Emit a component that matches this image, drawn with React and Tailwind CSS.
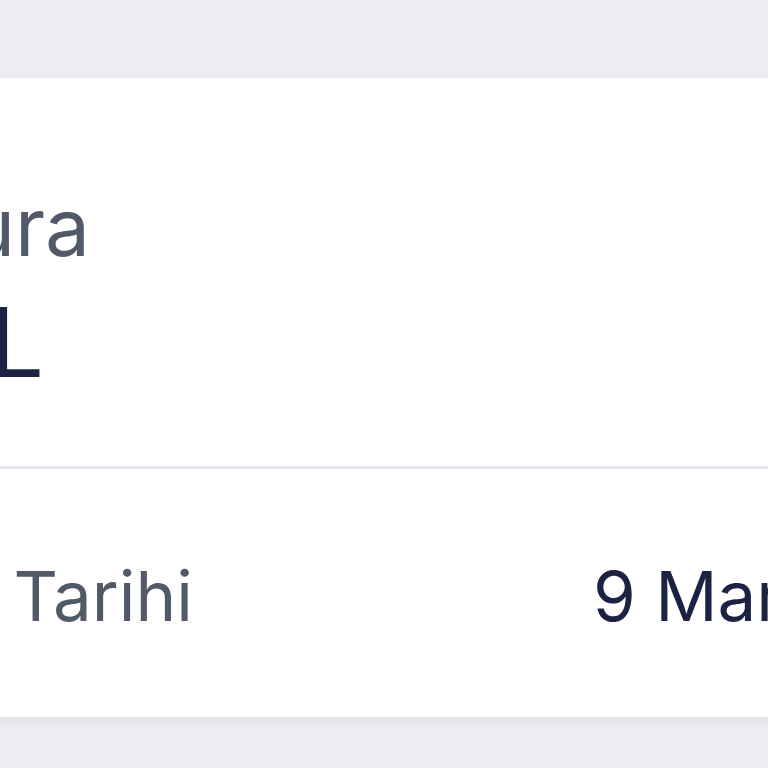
export default function App() {
  return (
    <div className="w-[768px] h-[768px] overflow-hidden bg-[#edeef2] pt-[78px] font-['Inter',sans-serif]">
      <div className="-ml-[400px] w-[1600px] bg-white shadow-[0_3px_12px_rgba(0,0,0,0.08)]">
        {/* Amount block */}
        <div className="pt-[109px] pb-[76px]">
          <div className="w-[490px] flex flex-col items-end">
            <div className="text-[80px] leading-none text-[#525a69]">Son Fatura</div>
            <div className="mt-[27px] mr-[46px] text-[96px] leading-none text-[#1c2241]">1.250 TL</div>
          </div>
        </div>

        <div className="h-[3px] bg-[#e3e7ee]" />

        {/* Date row */}
        <div className="pt-[93px] pb-[86px] flex items-baseline">
          <div className="w-[593px] text-right text-[69px] leading-none text-[#525a69]">Son Ödeme Tarihi</div>
          <div className="ml-[400px] text-[69px] leading-none text-[#1c2241]">9 Mart 2024</div>
        </div>
      </div>
    </div>
  );
}
